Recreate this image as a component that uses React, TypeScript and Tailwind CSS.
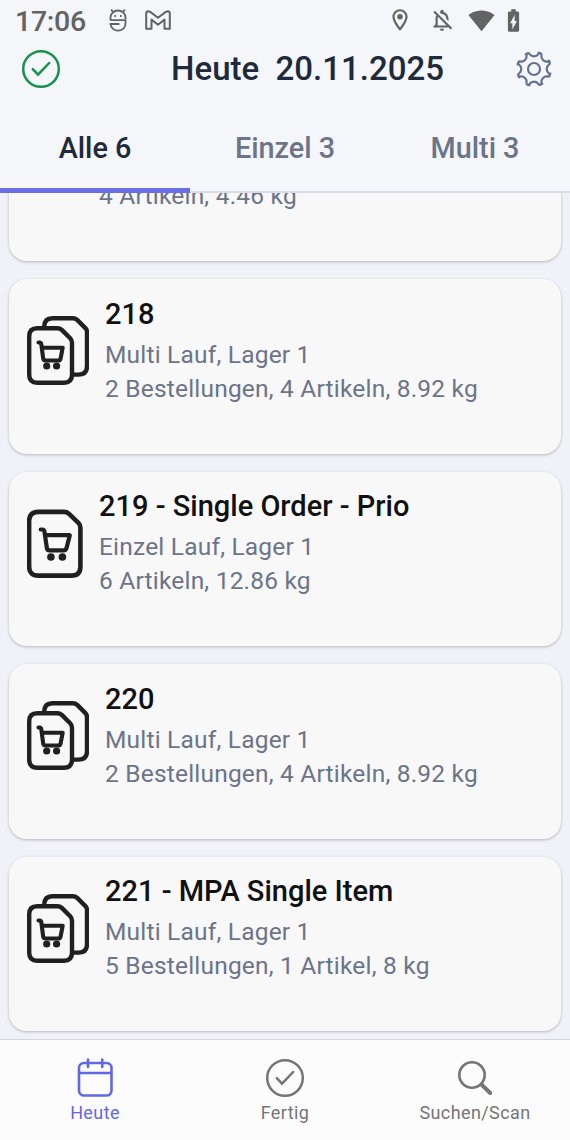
import { useState } from 'react'
import { MdOutlineLocationOn, MdSignalWifi4Bar, MdBatteryChargingFull, MdOutlineNotificationsOff } from 'react-icons/md'

interface Run {
  id: number
  title?: string
  type: 'single' | 'multi'
  summary: string
}

const runs: Run[] = [
  { id: 217, type: 'single', summary: '4 Artikeln, 4.46 kg' },
  { id: 218, title: '218', type: 'multi', summary: '2 Bestellungen, 4 Artikeln, 8.92 kg' },
  { id: 219, title: '219 - Single Order - Prio', type: 'single', summary: '6 Artikeln, 12.86 kg' },
  { id: 220, title: '220', type: 'multi', summary: '2 Bestellungen, 4 Artikeln, 8.92 kg' },
  { id: 221, title: '221 - MPA Single Item', type: 'multi', summary: '5 Bestellungen, 1 Artikel, 8 kg' }
]

const tabs = ['Alle 6', 'Einzel 3', 'Multi 3']

function CheckCircle({ className }: { className?: string }) {
  return (
    <svg viewBox="0 0 40 40" fill="none" stroke="currentColor" className={className}>
      <circle cx="20" cy="20" r="17.8" strokeWidth="2.5" />
      <path d="M11.8 20.2l5.2 5.4 11.2-11.6" strokeWidth="2.5" strokeLinecap="round" />
    </svg>
  )
}

const gearTeeth = [0, 45, 90, 135, 180, 225, 270, 315]

function GearIcon({ className }: { className?: string }) {
  return (
    <svg viewBox="0 0 40 40" fill="none" stroke="currentColor" strokeWidth="2.2" strokeLinecap="round" strokeLinejoin="round" className={className}>
      {gearTeeth.map(angle => (
        <path
          key={angle}
          d="M11.700 5.200L14 4.200Q15 3.900 15.600 5.100Q17.200 7.300 20 7.300T24.400 5.100Q25 3.900 26 4.200"
          transform={`rotate(${angle} 20 20)`}
        />
      ))}
      <circle cx="20" cy="20" r="6" />
    </svg>
  )
}

function SingleRunIcon() {
  return (
    <svg viewBox="0 0 56 70" width="56" height="70" fill="none" stroke="#202020" strokeWidth="4.6" strokeLinejoin="round" className="shrink-0">
      <path d="M11.3 2.9h25.7q2.8 0 4.8 1.8l9.6 9.2q2 2 2 4.8v38.7q0 9.2-9.2 9.2h-32.9q-9.2 0-9.2-9.2v-45.3q0-9.2 9.2-9.2z" />
      <path d="M13.7 20.5h1.600q1.800 0 2.100 1.900l2.500 16.700q.3 2.200 2.400 2.200h14.500q2.100 0 2.700-2.100l3.300-13h-24.400" strokeWidth="4.2" strokeLinecap="round" />
      <circle cx="23.900" cy="48" r="3.8" fill="#202020" stroke="none" />
      <circle cx="35.400" cy="48" r="3.8" fill="#202020" stroke="none" />
    </svg>
  )
}

function MultiRunIcon() {
  return (
    <svg viewBox="0 0 62 70" width="62" height="70" fill="none" stroke="#202020" strokeWidth="4.4" strokeLinejoin="round" className="shrink-0">
      <path d="M17.2 10.5q.3-8.300 8.100-8.300h20.500q2.600 0 4.400 1.700l8.200 8.200q1.600 1.700 1.600 4.200v34q0 8.300-8.300 8.300h-5.500" />
      <path d="M10.2 12.2h20.200q2.600 0 4.400 1.700l8.400 8.400q1.800 1.800 1.800 4.400v32q0 8-8 8h-26.800q-8 0-8-8v-38.500q0-8 8-8z" />
      <path d="M11.5 26.500h1q1.600 0 1.800 1.700l1.900 14.300q.3 2 2.200 2h12.800q2 0 2.400-2l2.100-10.800h-20.300" strokeWidth="4.1" strokeLinecap="round" />
      <circle cx="19.7" cy="50" r="3.6" fill="#202020" stroke="none" />
      <circle cx="29.6" cy="50" r="3.6" fill="#202020" stroke="none" />
    </svg>
  )
}

function StatusBar() {
  return (
    <div className="flex h-10 shrink-0 items-center pl-[15px] pr-[43px] text-[#636363]">
      <span className="w-[71px] pt-[3px] text-[28.5px] leading-10 font-medium tracking-[-0.3px]">17:06</span>
      <svg viewBox="0 0 18 24" width="18" height="24" fill="none" stroke="currentColor" strokeWidth="1.8" className="ml-[23px]">
        <path d="M1.5 12.500v-3a7.500 7 0 0 1 15 0v1.500M1.500 12.200h15v3a7.500 7 0 0 1-15 .8h9M3.800 4l-1.600-2.500M14.200 4l1.600-2.500" />
        <path d="M5.400 8h1.600M11 8h1.600" strokeWidth="2" />
      </svg>
      <svg viewBox="0 0 26 20" width="26" height="20" fill="none" stroke="currentColor" strokeWidth="2" strokeLinejoin="round" className="ml-[18px]">
        <path d="M1.2 3.500q0-2.300 2.200-2.300l1.800.7 7.800 5.900 7.800-5.900 1.800-.7q2.200 0 2.200 2.300v15.300h-5.300v-9.200l-6.500 5.100-6.500-5.100v9.200h-5.300z" />
      </svg>
      <div className="ml-auto flex items-center">
        <MdOutlineLocationOn className="size-[26px]" />
        <MdOutlineNotificationsOff className="ml-4 size-[26px]" />
        <MdSignalWifi4Bar className="ml-[13px] size-[27px]" />
        <MdBatteryChargingFull className="ml-[5px] size-[27px]" />
      </div>
    </div>
  )
}

function RunCard({ run }: { run: Run }) {
  const isMulti = run.type === 'multi'

  // scrolled card, only its last line is still visible below the tabs
  if (!run.title) {
    return (
      <div className="-mt-8 h-[101px] shrink-0 rounded-b-[18px] bg-[#f8f8f8] pt-[19px] pl-[90px] shadow-[0_1px_3px_rgba(40,45,60,0.3)]">
        <p className="text-[24.5px] leading-[34px] tracking-[0.2px] text-[#6b7489]">{run.summary}</p>
      </div>
    )
  }

  return (
    <div className="flex h-[174.5px] shrink-0 rounded-[18px] bg-[#f8f8f8] pl-[18px] pt-[17.7px] shadow-[0_1px_3px_rgba(40,45,60,0.3)]">
      <div className="pt-[19.8px]">{isMulti ? <MultiRunIcon /> : <SingleRunIcon />}</div>
      <div className="pl-4">
        <h2 className="text-[29px] leading-[34px] font-medium text-[#111111]">{run.title}</h2>
        <p className="mt-[7px] text-[24.5px] leading-[34px] tracking-[0.2px] text-[#6b7489]">
          {isMulti ? 'Multi Lauf, Lager 1' : 'Einzel Lauf, Lager 1'}
        </p>
        <p className="text-[24.5px] leading-[34px] tracking-[0.2px] text-[#6b7489]">{run.summary}</p>
      </div>
    </div>
  )
}

export default function App() {
  const [activeTab, setActiveTab] = useState(0)

  return (
    <div className="flex h-[1140px] w-[570px] flex-col overflow-hidden bg-[#f1f2f7] font-['Roboto',sans-serif]">
      <header className="flex shrink-0 flex-col bg-[#f4f6f9]">
        <StatusBar />
        <div className="flex h-[58px] items-center justify-between pl-[21px] pr-4">
          <CheckCircle className="size-10 text-[#15934f]" />
          <h1 className="pl-[40px] text-[33px] font-medium whitespace-pre text-[#1f2a3b]">{'Heute  20.11.2025'}</h1>
          <GearIcon className="size-10 text-[#667190]" />
        </div>
        <div className="grid h-[95px] grid-cols-3 border-b-2 border-[#d9dbe5]">
          {tabs.map((tab, i) => (
            <button
              key={tab}
              onClick={() => setActiveTab(i)}
              className={`-mb-[2px] border-b-[5px] pt-[11px] text-[28.8px] font-medium ${
                activeTab === i ? 'border-[#6a6ee6] text-[#1f2a3b]' : 'border-transparent text-[#6b7489]'
              }`}
            >
              {tab}
            </button>
          ))}
        </div>
      </header>

      <main className="flex min-h-0 flex-1 flex-col justify-end gap-[18px] overflow-hidden px-[9px] pb-2">
        {runs.map(run => (
          <RunCard key={run.id} run={run} />
        ))}
      </main>

      <nav className="grid h-[101px] shrink-0 grid-cols-3 border-t border-[#d4d5d9] bg-[#fcfcfc] text-[18px] tracking-[0.4px] text-[#757575]">
        <button className="flex flex-col items-center pt-[17px] text-[#6168e4]">
          <svg viewBox="0 0 40 42" width="40" height="42" fill="none" stroke="currentColor" strokeWidth="2.6" strokeLinecap="round">
            <rect x="4" y="6" width="32.5" height="32.5" rx="5" />
            <path d="M4 16h32M13 2.500v7.500M27.200 2.500v7.500" />
          </svg>
          <span className="mt-0.5 leading-6">Heute</span>
        </button>
        <button className="flex flex-col items-center pt-[18px]">
          <CheckCircle className="size-10" />
          <span className="mt-[3px] leading-6">Fertig</span>
        </button>
        <button className="flex flex-col items-center pt-[18px]">
          <svg viewBox="0 0 40 40" width="40" height="40" fill="none" stroke="currentColor" strokeWidth="2.6">
            <circle cx="17" cy="17" r="12.7" />
            <path d="M26.5 26.500l8.700 8.500" strokeWidth="4" strokeLinecap="round" />
          </svg>
          <span className="mt-[3px] leading-6">Suchen/Scan</span>
        </button>
      </nav>
    </div>
  )
}
